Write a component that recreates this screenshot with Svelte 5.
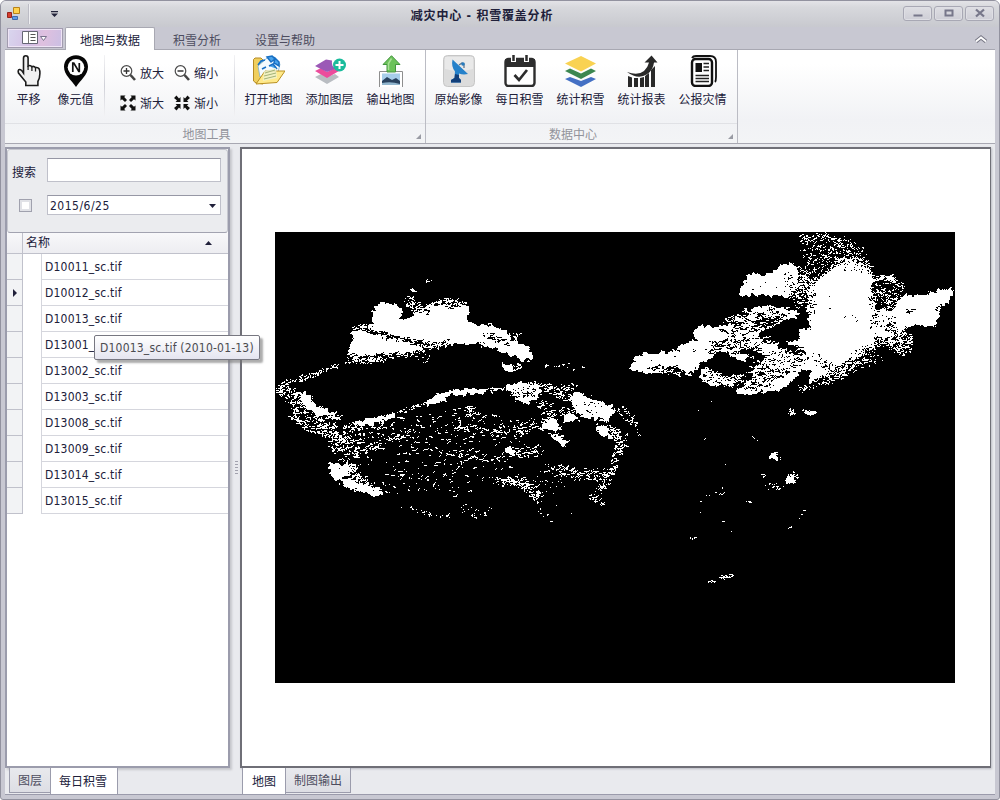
<script>
  const files = ['D10011', 'D10012', 'D10013', 'D13001', 'D13002', 'D13003', 'D13008', 'D13009', 'D13014', 'D13015'];
  const dataTools = [
    ['dish', '原始影像'],
    ['calendar', '每日积雪'],
    ['stack', '统计积雪'],
    ['chart', '统计报表'],
    ['news', '公报灾情']
  ];
  const mapTools = [
    ['folder', '打开地图'],
    ['layers', '添加图层'],
    ['export', '输出地图']
  ];

  let seed = 7331;
  function rnd() {
    seed = (seed * 1664525 + 1013904223) % 4294967296;
    return seed / 4294967296;
  }
  // Scattered pixel clusters along a polyline: points, half width, count, cluster size
  function band(pts, w, n, run = 2) {
    const seg = [];
    let total = 0;
    for (let i = 1; i < pts.length; i++) {
      const l = Math.hypot(pts[i][0] - pts[i - 1][0], pts[i][1] - pts[i - 1][1]);
      seg.push(l);
      total += l;
    }
    let d = '';
    for (let k = 0; k < n; k++) {
      let t = rnd() * total;
      let i = 0;
      while (i < seg.length - 1 && t > seg[i]) t -= seg[i++];
      const a = pts[i], b = pts[i + 1];
      const f = t / seg[i];
      const ang = rnd() * 6.283;
      const r = Math.sqrt(rnd()) * w;
      let x = Math.round(a[0] + (b[0] - a[0]) * f + Math.cos(ang) * r);
      let y = Math.round(a[1] + (b[1] - a[1]) * f + Math.sin(ang) * r);
      const len = 1 + Math.floor(rnd() * rnd() * run * 1.7);
      for (let s = 0; s < len; s++) {
        d += `M${x} ${y}h1v1h-1z`;
        const q = rnd();
        if (q < 0.6) x += 1;
        else if (q < 0.8) y += 1;
        else { x += 1; y -= 1; }
      }
    }
    return d;
  }
  const specks = [
    // north-west mountains
    band([[425, 281], [432, 282]], 2, 6), band([[409, 291], [414, 290]], 2, 10),
    band([[408, 300], [418, 310], [425, 308]], 6, 80, 3),
    band([[430, 305], [448, 299], [464, 304]], 3, 60, 3),
    band([[347, 359], [362, 360], [385, 357]], 4, 110, 3), band([[385, 357], [412, 353], [440, 345]], 3, 60, 3),
    band([[405, 350], [430, 356]], 9, 16), band([[350, 328], [375, 326]], 3, 25, 3),
    band([[485, 327], [516, 335]], 3, 25, 3), band([[512, 367], [521, 365]], 3, 15, 3),
    // western border
    band([[336, 365], [318, 372], [305, 378], [285, 381], [278, 390], [284, 396]], 3, 125, 3),
    band([[284, 386], [302, 398], [320, 412], [340, 418]], 3, 100, 4),
    band([[286, 394], [300, 408], [320, 424], [345, 434], [360, 433]], 9, 230, 4),
    band([[290, 414], [308, 428], [330, 433]], 4, 70, 4),
    band([[332, 434], [338, 448], [358, 445]], 8, 95, 4),
    band([[340, 460], [370, 448], [390, 439], [412, 431]], 4, 75, 4),
    band([[333, 468], [341, 474], [356, 465]], 5, 70, 4),
    band([[340, 480], [355, 487], [380, 492]], 4, 65, 4), band([[350, 475], [370, 482]], 5, 50, 4),
    band([[350, 424], [380, 418], [410, 408], [430, 402], [445, 392], [475, 390], [506, 388]], 2, 140, 4),
    band([[400, 505], [425, 513], [450, 516]], 2, 26), band([[462, 506], [475, 514], [490, 511]], 5, 26),
    // plateau interior
    band([[360, 435], [410, 430], [460, 425], [520, 435]], 18, 170, 4),
    band([[375, 460], [430, 457], [500, 466]], 22, 100, 4),
    band([[380, 483], [430, 480], [460, 492]], 14, 50, 3),
    band([[462, 410], [485, 414]], 6, 30, 5), band([[455, 425], [490, 430], [530, 432]], 5, 65, 5),
    band([[440, 452], [475, 455], [505, 463]], 5, 32, 5),
    band([[498, 482], [517, 479], [532, 491], [540, 500]], 6, 125, 4),
    band([[505, 452], [540, 450]], 6, 45, 4), band([[545, 469], [575, 474], [610, 475]], 7, 130, 3),
    band([[520, 425], [550, 422]], 6, 50, 4), band([[549, 434], [565, 442]], 3, 30, 4),
    band([[540, 480], [562, 492]], 12, 18), band([[536, 500], [560, 516]], 15, 9),
    // plateau east
    band([[512, 387], [545, 386], [565, 396]], 5, 110, 4), band([[540, 400], [553, 425]], 7, 70, 4),
    band([[560, 388], [576, 386]], 4, 30), band([[560, 410], [576, 415]], 5, 35, 4),
    band([[597, 415], [622, 408], [633, 420], [638, 436]], 3, 60), band([[604, 428], [622, 438], [618, 454]], 6, 115, 3),
    band([[617, 445], [612, 470], [603, 485], [592, 498], [601, 502]], 4, 110, 3),
    band([[540, 362], [580, 368]], 4, 12, 4),
    // north-east
    band([[800, 239], [820, 235], [840, 243]], 5, 75, 3), band([[805, 252], [830, 258], [848, 252]], 12, 190, 2),
    band([[812, 270], [805, 288], [800, 300]], 11, 240, 2), band([[793, 265], [800, 294]], 9, 90, 3),
    band([[840, 240], [855, 248], [862, 260]], 7, 55), band([[845, 262], [862, 265], [868, 278]], 7, 190, 3),
    band([[870, 278], [890, 278], [903, 286]], 3, 80, 4), band([[875, 285], [893, 298], [880, 310]], 12, 170, 2),
    band([[880, 315], [900, 325], [905, 345]], 8, 180, 4), band([[865, 340], [885, 338], [905, 348]], 9, 190, 3),
    band([[725, 324], [750, 312], [785, 310]], 6, 110, 5), band([[742, 340], [765, 345], [785, 360]], 9, 170, 6),
    band([[702, 370], [725, 380], [745, 380]], 5, 110, 5), band([[755, 372], [780, 360], [810, 360]], 11, 200, 5),
    band([[815, 380], [845, 370], [860, 355]], 8, 200, 3), band([[850, 360], [876, 355]], 9, 75),
    band([[635, 370], [655, 371], [690, 374]], 2, 55, 4), band([[800, 388], [810, 386]], 4, 25),
    band([[815, 300], [825, 275], [842, 262], [856, 262]], 5, 150, 3), band([[865, 280], [872, 310], [868, 345]], 6, 150, 3),
    // south-east scatter
    band([[790, 412], [792, 411]], 3, 26, 3), band([[803, 411], [814, 413]], 2, 60, 3),
    band([[752, 436], [758, 440]], 1, 5), band([[771, 452], [780, 460]], 3, 14),
    band([[788, 472], [797, 480]], 5, 16), band([[760, 475], [765, 475]], 1, 8), band([[762, 485], [782, 486]], 4, 18),
    band([[705, 497], [728, 490]], 3, 7), band([[745, 501], [750, 501]], 1, 5), band([[690, 537], [697, 540]], 2, 6),
    band([[719, 577], [727, 577], [732, 573]], 2, 30, 3), band([[707, 581], [716, 580]], 2, 7),
    band([[785, 530], [792, 526]], 1, 4), band([[797, 520], [803, 510]], 2, 4),
    band([[620, 413], [632, 425]], 2, 12), band([[690, 400], [720, 545]], 34, 9)
  ].join('');

  const holes = [
    band([[351, 327], [378, 333], [410, 341], [425, 344]], 3, 130, 6),
    band([[415, 302], [425, 310]], 7, 65, 4), band([[447, 305], [462, 303]], 4, 50, 4),
    band([[425, 346], [450, 342]], 4, 45, 3), band([[483, 333], [508, 344]], 3, 35, 4),
    band([[348, 358], [400, 355]], 4, 45, 3), band([[510, 391], [535, 389]], 7, 55, 3),
    band([[580, 406], [600, 412]], 10, 22), band([[340, 465], [378, 489]], 6, 25),
    band([[785, 275], [796, 294]], 6, 45), band([[808, 285], [808, 315]], 7, 90, 2),
    band([[840, 266], [865, 266]], 5, 50), band([[872, 285], [874, 330]], 5, 80),
    band([[845, 366], [870, 347]], 7, 60), band([[815, 358], [835, 370]], 6, 55),
    band([[725, 328], [745, 322], [780, 313]], 10, 170, 7), band([[712, 350], [740, 342], [765, 350]], 11, 170, 7),
    band([[760, 330], [790, 325]], 9, 90, 5), band([[750, 378], [775, 366], [800, 355]], 12, 220, 7),
    band([[745, 388], [775, 384]], 4, 25), band([[703, 375], [732, 382]], 5, 50, 4),
    band([[645, 369], [665, 367], [685, 372]], 2, 50, 6), band([[905, 312], [912, 310]], 3, 9, 4),
    band([[935, 310], [941, 304]], 3, 12, 3), band([[885, 320], [900, 330]], 8, 65, 4),
    band([[740, 283], [790, 288]], 5, 8), band([[650, 360], [710, 348]], 5, 9), band([[820, 295], [865, 335]], 8, 6)
  ].join('');
</script>

{#snippet icon(name)}
  <svg class="ico" viewBox="0 0 32 32">
    {#if name === 'hand'}
      <path d="M10.500 18V3.200Q10.500.8 12.800.8t2.300 2.400V11q2.300-1.200 3.700.7 2.100-1.100 3.600.9 2.500-.6 3.700 1.200.9 1.500.8 4.700 0 4.500-2 8v4H12.800V27L5.500 18Q4.500 15 6.500 14.500 8.200 14.200 10.500 18z" fill="#f1f1f1" stroke="#1c1c1c" stroke-width="1.600"/>
      <path d="M15.100 11v4M18.900 12v4M22.500 13v3.500" stroke="#222" stroke-width="1.300"/>
    {:else if name === 'pin'}
      <path d="M16 .2C9 .2 4 5.200 4 11.800 4 20 11.500 25 16 32 20.500 25 28 20 28 11.800 28 5.200 23 .2 16 .2z" fill="#050505"/>
      <circle cx="16" cy="12.300" r="8.300" fill="#fff"/>
      <path d="M12.800 17V8h1l5 8.500h.5V8" fill="none" stroke="#111" stroke-width="1.700"/>
    {:else if name === 'folder'}
      <path d="M.5 4.500L2 3h6l2 2v24l-7-1-2.500-2z" fill="#f0cf5e" stroke="#b58b24"/>
      <path d="M5 11l9-8 6-2 7 8-3 13H7z" fill="#f4fafe" stroke="#7eaecd" stroke-width=".8"/>
      <path d="M14 2l5-1 3 3-4 3zM22 3l4 4v4l-5-3zM5 10l3-4 4-1M16 11l4-2 4 5M9 14l4-2" fill="#4aa3ea" stroke="#176fc4" stroke-width="1.500"/>
      <path d="M3 29l9-13h20l-8 11.500z" fill="#ffe98a" stroke="#b99021"/>
      <path d="M11 16l12-3 1 10-14 3z" fill="#eef3d4" opacity=".75"/>
      <path d="M12 18l10-3M11 21l12-3M11 24l12-3" stroke="#a3b277"/>
    {:else if name === 'layers'}
      <path d="M1 22l6-3 6 3 8-3 4 3-12 7z" fill="#b9bdc2"/>
      <path d="M1 16l6-3 6 4 8-4 4 3-12 7z" fill="#ec4c9c"/>
      <path d="M1 11L12 4.500l6 1q-1 6 4 8L13 17z" fill="#9b59b6"/>
      <circle cx="25.500" cy="10" r="6.500" fill="#1abc9c"/><path d="M21.500 10h8M25.500 6v8" stroke="#fff" stroke-width="2"/>
    {:else if name === 'export'}
      <path d="M4.500 32V16.500h23V32" fill="#fff" stroke="#8e8e8e"/>
      <path d="M7 18.500h18V30H7z" fill="#a7cdea"/><path d="M7 26l5-4 5 3 4-2 4 3v4H7z" fill="#29425e"/><path d="M7 28q9-2 18 1v1H7z" fill="#91b6ce"/>
      <path d="M12 17V9.500H8L16.500.700l8.500 8.800h-4.500V17z" fill="#6cc25a" stroke="#43953e"/><path d="M13.500 15V8.500l3-5" fill="none" stroke="#a9df96" stroke-width="1.500"/>
    {:else if name === 'dish'}
      <rect x=".5" y=".5" width="31" height="31" rx="4" fill="#dcdcdc" stroke="#c6c6c6"/>
      <path d="M2 2h28v12Q16 18 2 14z" fill="#e9e9e9"/>
      <path d="M9.500 4.500L25 19q-5 1-9-.5V23l2 2v2.500H8V25l3.500-2 .5-6.500q-4-5-2.500-12z" fill="#2581ca"/>
      <path d="M12 19l4 1v3l2 2v2.500H8V25l3.500-2z" fill="#123f7a"/>
      <path d="M16 10l3-2 2 1v4" fill="none" stroke="#56708a" stroke-width="1.200"/>
      <circle cx="20" cy="9" r="1.800" fill="#277bbd"/>
    {:else if name === 'calendar'}
      <rect x="1.500" y="4" width="29" height="27" rx="3" fill="#fff" stroke="#2d2d2d" stroke-width="2.400"/>
      <path d="M1 4h30v8H1z" fill="#2d2d2d"/><path d="M9.500 0v7M22.500 0v7" stroke="#fff" stroke-width="5"/><path d="M9.500 0v6M22.500 0v6" stroke="#2d2d2d" stroke-width="2.500"/>
      <path d="M10.500 20l4.500 5 8-10" fill="none" stroke="#2d2d2d" stroke-width="2.700"/>
    {:else if name === 'stack'}
      <path d="M0 24l5-2 11 4 10-4 5 2-15 8z" fill="#4470c4"/>
      <path d="M0 16l5-2.500 11 5 10-5 5 2.500-15 8z" fill="#3c8750"/>
      <path d="M0 8.500L16 1l15 7.500L16 16.500z" fill="#f9d252"/>
    {:else if name === 'chart'}
      <path d="M2 21l4 1.500V32H2zM8 23h4v9H8zM14 23l4-1v10h-4zM19 21l4-3v14h-4zM25 15l4-4v21h-4z" fill="#292929"/>
      <path d="M1 17Q12 21 18 16q4-4 5-8.500h-4.500L25.500.5l6 7H28Q27 15.500 21 19.300 12 25 1 17z" fill="#292929"/>
    {:else}
      <path d="M5 3q1-2 4-2h14q6 0 6 6v15q0 4-1 5" fill="none" stroke="#111" stroke-width="1.800"/>
      <rect x="5" y="4" width="20" height="27" rx="3.500" fill="#fff" stroke="#111" stroke-width="2.400"/>
      <path d="M8.500 8H15v9H8.500z" fill="#111"/><path d="M16.500 8.500H22M16.500 12H22M16.500 15.500H22M8.500 20.500H22M8.500 23.500H22M8.500 26.500H22" stroke="#222" stroke-width="1.400"/>
    {/if}
  </svg>
{/snippet}

{#snippet small(name)}
  <svg class="sico" viewBox="0 0 16 16">
    {#if name === 'in' || name === 'out'}
      <circle cx="6.500" cy="6" r="5.300" fill="#fff" stroke="#4b4b4b" stroke-width="1.200"/>
      <path d="M10.500 10l4.500 5" stroke="#444" stroke-width="2.600"/><path d="M3.500 6h6" stroke="#333" stroke-width="1.300"/>
      {#if name === 'in'}<path d="M6.500 3v6" stroke="#333" stroke-width="1.300"/>{/if}
    {:else if name === 'grow'}
      <path d="M.5.500h5L4.200 2 7 5 5 7 2 4.200.5 5.500zM15.500.500v5L14 4.200 11 7 9 5l2.800-3L10.500.500zM.5 15.500v-5L2 11.800 5 9l2 2-2.800 3 1.300 1.500zM15.500 15.500h-5l1.300-1.500L9 11l2-2 3 2.800 1.500-1.300z" fill="#111"/>
    {:else}
      <path d="M2.500.5L5 3.500 6.500 2v5h-5L3 5.500 0 3zM13.500.5L11 3.500 9.500 2v5h5L13 5.500 16 3zM2.500 15.500L5 12.500 6.500 14V9h-5L3 10.500 0 13zM13.500 15.500L11 12.500 9.500 14V9h5L13 10.500l3 2.500z" fill="#111"/>
    {/if}
  </svg>
{/snippet}

<div class="window">
  <header class="title">
    <svg class="app" viewBox="0 0 14 14"><path d="M.5 5.500h4v5h-4z" fill="#d63c2d" stroke="#96241d"/><path d="M6.500.5h6v6h-6z" fill="#ffd24d" stroke="#b98219"/><path d="M5.500 9.500h5v3h-5z" fill="#5d9ceb" stroke="#4069a9"/></svg>
    <i class="tsep"></i>
    <svg class="quick" viewBox="0 0 7 6"><path d="M0 0h7v1.300H0zM0 2.500h7L3.500 6z" fill="#24243b"/></svg>
    <b>减灾中心 - 积雪覆盖分析</b>
    <div class="winbtns">
      <span><svg viewBox="0 0 12 10"><path d="M1.500 6.500h9v2h-9z" fill="#77778a"/></svg></span>
      <span><svg viewBox="0 0 12 10"><path d="M2.500 2.500h7v5h-7z" fill="none" stroke="#77778a" stroke-width="2"/></svg></span>
      <span><svg viewBox="0 0 12 10"><path d="M2 1.500l8 7M10 1.500l-8 7" stroke="#77778a" stroke-width="2.300"/></svg></span>
    </div>
  </header>
  <nav class="tabs">
    <div class="menu"><svg viewBox="0 0 26 14"><path d="M.5.500h15v12H.5z" fill="#fff" stroke="#666675"/><path d="M6.500 1v11" stroke="#777"/><path d="M8.500 3.500h5M8.500 6.500h5M8.500 9.500h5" stroke="#555"/><path d="M18.500 5.500h6L21.500 9.500z" fill="#fff" stroke="#77718b"/></svg></div>
    <div class="tab on">地图与数据</div>
    <div class="tab second">积雪分析</div>
    <div class="tab third">设置与帮助</div>
    <svg class="collapse" viewBox="0 0 14 10"><path d="M2 7.500l5-4 5 4" fill="none" stroke="#777785" stroke-width="4"/><path d="M2 7.500l5-4 5 4" fill="none" stroke="#fff" stroke-width="1.800"/></svg>
  </nav>
  <section class="ribbon">
    <div class="group g1">
      <div class="tools">
        <div class="tool hand">{@render icon('hand')}<span>平移</span></div>
        <div class="tool pin">{@render icon('pin')}<span>像元值</span></div>
        <i class="vsep"></i>
        <div class="zooms">
          <div>{@render small('in')}放大</div><div>{@render small('out')}缩小</div>
          <div>{@render small('grow')}渐大</div><div>{@render small('shrink')}渐小</div>
        </div>
        <i class="vsep"></i>
        <div class="maptools">{#each mapTools as [n, label]}<div class="tool">{@render icon(n)}<span>{label}</span></div>{/each}</div>
      </div>
      <footer>地图工具<i class="corner"></i></footer>
    </div>
    <div class="group g2">
      <div class="tools two">{#each dataTools as [n, label]}<div class="tool">{@render icon(n)}<span>{label}</span></div>{/each}</div>
      <footer>数据中心<i class="corner"></i></footer>
    </div>
  </section>
  <main>
    <aside>
      <div class="panel">
        <div class="search">
          <label for="q">搜索</label><input id="q" />
          <i class="check"></i>
          <div class="date">2015/6/25<svg viewBox="0 0 7 4"><path d="M0 0h7L3.500 4z" fill="#20203a"/></svg></div>
        </div>
        <div class="head"><i></i><span>名称</span><svg viewBox="0 0 7 4"><path d="M0 4h7L3.500 0z" fill="#20203a"/></svg></div>
        {#each files as f, i}
          <div class="row"><i>{#if i === 1}<svg viewBox="0 0 4 8"><path d="M0 0v8l4-4z" fill="#20203a"/></svg>{/if}</i><em></em><span>{f}_sc.tif</span></div>
        {/each}
      </div>
      <div class="btabs left"><span class="off">图层</span><span class="cur">每日积雪</span></div>
    </aside>
    <div class="split"><i></i></div>
    <article>
      <div class="canvas">
        <svg class="map" viewBox="275 232 680 451" shape-rendering="crispEdges">
          <defs>
            <filter id="rough" x="275" y="232" width="680" height="451" filterUnits="userSpaceOnUse" color-interpolation-filters="sRGB">
              <feMorphology in="SourceGraphic" operator="dilate" radius="0.5" result="g"/>
              <feTurbulence type="fractalNoise" baseFrequency="0.2" numOctaves="3" seed="4" result="n"/>
              <feDisplacementMap in="g" in2="n" scale="8" xChannelSelector="R" yChannelSelector="G"/>
              <feComponentTransfer><feFuncA type="discrete" tableValues="0 1"/></feComponentTransfer>
            </filter>
          </defs>
          <path d="M275 232h680v451H275z"/>
          <g fill="#fff" stroke="#fff" stroke-width="1" filter="url(#rough)">
            <path d="M381 303L385 306 389 304 399 308 402 313 392 319 409 321 418 313 430 306 444 306 448 301 452 307 463 303 468 309 465 322 475 326 490 327 502 331 508 336 497 335 514 342 527 348 531 357 525 359 506 352 490 344 471 342 450 342 432 346 415 349 400 353 383 352 367 355 350 355 351 346 356 344 352 331 365 327 376 324 374 314z"/>
            <path d="M302 394l8 5 5 7 11 5 9 3-18-1-11-8zM357 424l13-4 16-3 8-2-14 6-15 4zM332 464l9 2 6-1 2 5-9 5-3 5-6-9zM341 480l8 1 12 7 2-3 8 2 10 6-6 2-9-5-15-3zM429 402l8-5 12-5-4 7-9 3zM446 393l24-3 12 2-34 2zM509 386l12-2 12 1 6 3-4 9-8 6-8-4-7-5zM570 398l7-6 4 1 3 6 4-1 5 4 9 1 8 4 3 4-5 4-1 6-8-4-6 2-12-6-4-2zM565 415l7 0 4 4-11 0zM542 426l7-1 2-6 6 1-1 6 4 1-4 3zM598 427l9 3 2 6-7-3zM507 450l5 1 2 2-6-1zM555 438l6 1 3 4-6-2zM504 366l7 1-1 3-4-1z"/>
            <path d="M740 293L746 284 751 275 766 277 775 272 784 265 793 267 797 279 792 292 786 296 774 294 761 294z"/>
            <path d="M631 369L637 359 644 355 673 353 688 344 700 341 695 334 699 327 708 328 724 327 736 321 748 318 753 311 770 308 783 310 792 314 768 318 754 325 743 332 752 336 740 340 740 349 716 352 700 362 690 372 676 366 662 367 651 371z"/>
            <path d="M720 330L746 319 785 310 798 314 776 322 760 331 745 345 730 350 715 347z"/>
            <path d="M808 305L812 288 824 277 837 268 855 262 869 276 870 292 874 312 893 311 897 305 906 296 927 297 940 291 952 289 950 297 940 308 933 325 919 323 909 325 895 330 887 337 876 334 868 347 858 355 845 361 835 367 825 373 814 376 810 383 812 369 802 368 793 377 779 390 760 391 748 394 739 391 748 384 757 381 752 373 762 366 764 360 775 355 793 356 810 354 800 346 788 344 802 340 800 331 812 330 810 320z"/>
            <path d="M703 371l11 3 5 5 10 0 3 6-12-2-9 1-9-4zM729 352l22 5-10 3zM740 340l10-2 12 5 20 8 10 6-24-2-14-7z"/>
            <path d="M788 476l4 0 1 5-4 0zM773 454h2v3h-3z"/>
          </g>
          <path d={holes} fill="#000"/>
          <path d={specks} fill="#fff"/>
        </svg>
      </div>
      <div class="btabs right"><span class="cur">地图</span><span class="off">制图输出</span></div>
    </article>
  </main>
  <div class="tip">D10013_sc.tif (2010-01-13)</div>
</div>

<style>
  :global(body) { background: #fff; overflow: hidden; }
  * { box-sizing: border-box; }
  i, em { font-style: normal; display: block; }
  svg { display: block; flex: none; }
  .window { position: relative; width: 1000px; height: 800px; display: flex; flex-direction: column; border: 1px solid #92929f; border-radius: 6px 6px 3px 3px; padding: 0 4px 4px; background: #c8c8d2; color: #20203a; font: 12px/16px "DejaVu Sans", "Noto Sans CJK SC", sans-serif; font-stretch: condensed; overflow: hidden; }
  .title { height: 26px; margin: 0 -4px; display: flex; align-items: center; flex: none; background: linear-gradient(#e3e3e7 0, #d7d8dc 25%, #c8c9cf); }
  .app { width: 14px; height: 14px; margin-left: 6px; }
  .tsep { width: 2px; height: 20px; margin-left: 7px; border-left: 1px solid #bcbcc5; border-right: 1px solid #efeff2; }
  .quick { width: 7px; height: 6px; margin-left: 21px; }
  .title b { width: 160px; margin-left: 344px; text-align: center; font-size: 12px; letter-spacing: .8px; padding-top: 3px; white-space: nowrap; }
  .winbtns { display: flex; gap: 2px; margin: -2px 5px 0 auto; }
  .winbtns span { width: 29px; height: 15px; border: 1px solid #a8a8b4; border-radius: 3px; background: linear-gradient(#dedee3, #ceced6); box-shadow: inset 0 0 0 1px #dedee4; display: flex; justify-content: center; align-items: center; }
  .winbtns svg { width: 12px; height: 10px; }
  .tabs { height: 22px; flex: none; display: flex; color: #4d4d60; }
  .menu { width: 56px; height: 20px; margin: 1px 2px 0 2px; border: 1px solid #a29caf; box-shadow: inset 0 0 0 1px #eee4f5; background: linear-gradient(105deg, #d9d6ee, #d4bfe4 45%, #dfc0df 65%, #cabfe4); display: flex; justify-content: center; align-items: center; }
  .menu svg { width: 26px; height: 14px; }
  .tab { width: 90px; height: 23px; padding-top: 6px; text-align: center; }
  .on { color: #20203a; background: #fff; border: 1px solid #a8a8b2; border-bottom: 0; border-radius: 2px 2px 0 0; padding-top: 5px; z-index: 1; }
  .second { width: 84px; }
  .third { width: 92px; }
  .collapse { width: 14px; height: 10px; margin: 7px 7px 0 auto; }
  .ribbon { height: 95px; flex: none; display: flex; background: linear-gradient(#fff 15%, #f1f2f5 75%, #f3f4f6); border: 1px solid #a8a8b2; border-width: 1px 0 1px; }
  .group { border-right: 1px solid #bbbcc4; display: flex; flex-direction: column; }
  .g1 { width: 421px; } .g2 { width: 312px; }
  .tools { height: 75px; display: flex; padding-top: 5px; border-bottom: 1px solid #e0e1e5; }
  .two { padding-left: 2px; }
  .tool { width: 61px; display: flex; flex-direction: column; align-items: center; white-space: nowrap; }
  .tool span { margin-top: 5px; }
  .ico { width: 32px; height: 32px; }
  .hand { width: 47px; } .pin { width: 47px; }
  .vsep { width: 1px; height: 62px; background: linear-gradient(#f3f3f5, #d0d1d8 50%, #f3f3f5); margin-left: 5px; }
  .zooms { width: 124px; padding: 3px 0 0 15px; display: grid; grid-template-columns: 54px 54px; grid-template-rows: 30px 30px; }
  .zooms div { display: flex; align-items: center; height: 30px; gap: 4px; white-space: nowrap; padding-top: 1px; }
  .sico { width: 16px; height: 16px; margin-top: -1px; }
  .maptools { display: flex; margin-left: 3px; }
  .group footer { flex: 1; text-align: center; color: #92939b; padding: 3px 17px 0 0; position: relative; }
  .corner { position: absolute; right: 4px; bottom: 4px; border: solid #999ba4; border-width: 0 0 5px 5px; border-left-color: transparent; }
  main { flex: 1; min-height: 0; display: flex; background: #e9eaee; padding-top: 3px; border-bottom: 1px solid #9b9bab; }
  aside { width: 225px; display: flex; flex-direction: column; }
  .panel { height: 621px; flex: none; border: 2px solid #9b9cac; background: #fff; box-shadow: 2px 2px 2px #c6c7cc; }
  .search { height: 84px; background: #ebecef; border: 1px solid #c6c7cf; border-bottom-color: #a2a3b0; border-radius: 3px; padding: 8px 6px 0 4px; display: grid; grid-template-columns: 35px 174px; grid-template-rows: 37px 22px; }
  .search label { padding-top: 7px; }
  input { width: 174px; height: 24px; border: 1px solid #bfc0ca; border-top-color: #9697a5; background: #fff; padding: 0; }
  .check { width: 13px; height: 13px; border: 1px solid #a0a1ae; background: #fff; box-shadow: inset 0 0 0 2px #e1e2e7; margin: 4px 0 0 7px; }
  .date { height: 20px; border: 1px solid #bfc0ca; border-top-color: #9697a5; background: #fff; padding: 1px 4px 0 2px; display: flex; align-items: center; justify-content: space-between; letter-spacing: .5px; }
  .date svg, .head svg { width: 7px; height: 4px; }
  .head { height: 21px; display: flex; align-items: center; background: linear-gradient(#f8f8fa, #ededf1); border-bottom: 1px solid #c0c1cb; }
  .head i { width: 16px; height: 20px; border-right: 1px solid #c0c1cb; }
  .head span { margin-left: 3px; width: 179px; }
  .row { height: 26px; display: flex; }
  .row i { width: 16px; background: #f2f3f5; border: 1px solid #c0c1cb; border-width: 0 1px 1px 0; padding: 9px 0 0 6px; }
  .row i svg { width: 4px; height: 8px; }
  .row em { width: 18px; }
  .row span { flex: 1; border: 1px solid #d5d6dd; border-width: 0 0 1px 1px; padding: 5px 0 0 3px; letter-spacing: .2px; }
  .btabs { display: flex; flex: 1; align-items: flex-start; }
  .btabs span { border: 1px solid #9b9cac; border-top: 0; text-align: center; white-space: nowrap; }
  .off { height: 25px; padding-top: 5px; background: linear-gradient(#e8e9ed, #dddee4); color: #4d4d60; }
  .cur { height: 27px; padding-top: 6px; background: #fff; color: #20203a; position: relative; }
  .left { padding-left: 4px; }
  .left .off { width: 41px; border-right: 0; } .left .cur { width: 68px; padding-right: 2px; }
  .right { padding-left: 2px; }
  .right .cur { width: 44px; } .right .off { width: 65px; border-left: 0; }
  .split { width: 10px; padding: 314px 0 0 5px; }
  .split i { width: 3px; height: 14px; background: repeating-linear-gradient(#a2a2ae 0 1px, transparent 1px 3px); }
  article { width: 751px; display: flex; flex-direction: column; }
  .canvas { height: 621px; flex: none; border: 1px solid #6f6f77; border-width: 2px 1px 2px 2px; background: #fff; box-shadow: 1px 1px 2px #bbbcc3; padding: 83px 0 0 33px; }
  .map { width: 680px; height: 451px; }
  .tip { position: absolute; left: 93px; top: 334px; width: 166px; height: 25px; padding: 4px 0 0 5px; border: 1px solid #777781; border-radius: 2px; background: linear-gradient(#fff, #e5e5f0); box-shadow: 3px 3px 2px #77777799; color: #4b4b50; white-space: nowrap; letter-spacing: .2px; }
</style>
